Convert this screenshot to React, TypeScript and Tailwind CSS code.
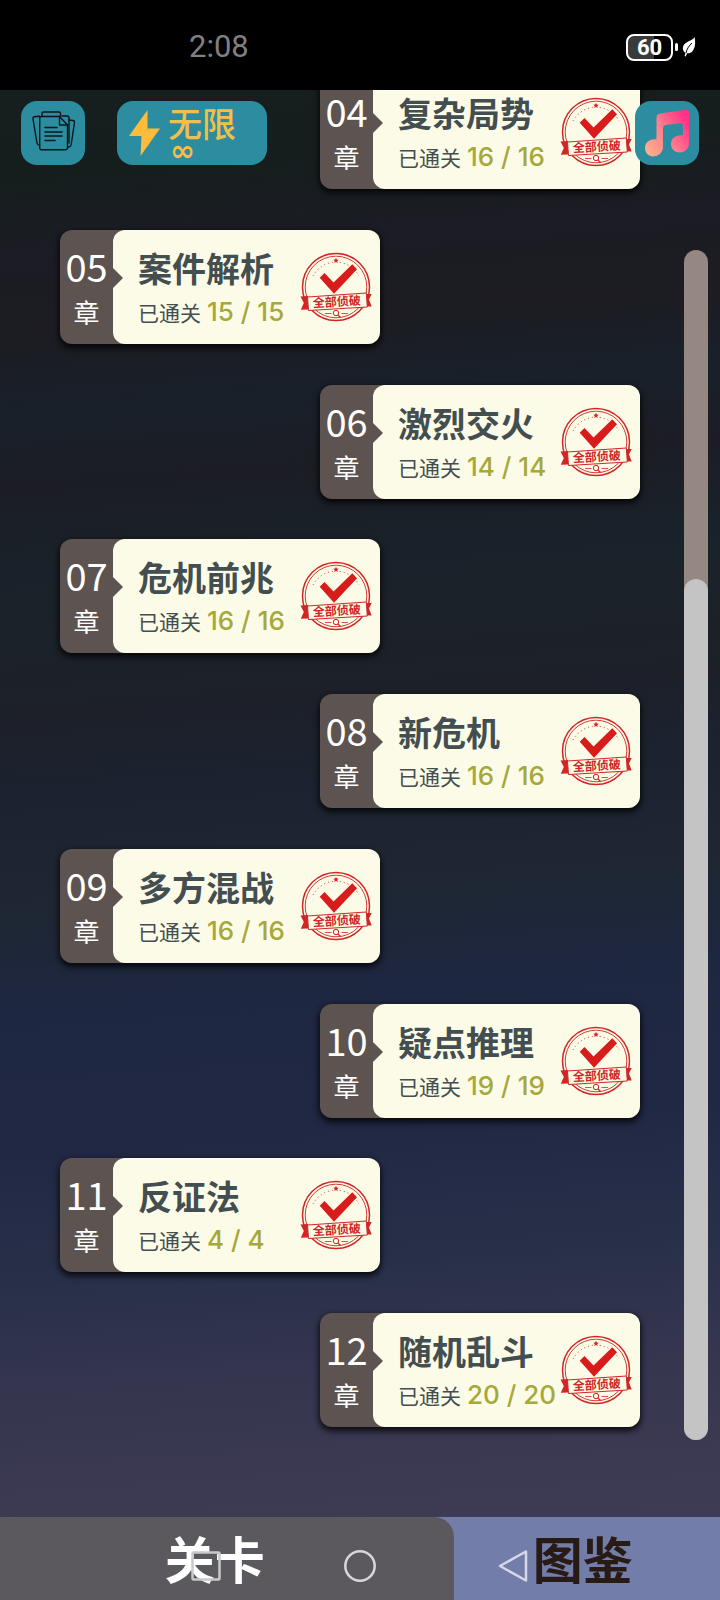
import { FC, ReactElement } from 'react';

interface Chapter {
  id: string;
  title: string;
  done: number;
  total: number;
}

const chapters: Chapter[] = [
  { id: '04', title: '复杂局势', done: 16, total: 16 },
  { id: '05', title: '案件解析', done: 15, total: 15 },
  { id: '06', title: '激烈交火', done: 14, total: 14 },
  { id: '07', title: '危机前兆', done: 16, total: 16 },
  { id: '08', title: '新危机', done: 16, total: 16 },
  { id: '09', title: '多方混战', done: 16, total: 16 },
  { id: '10', title: '疑点推理', done: 19, total: 19 },
  { id: '11', title: '反证法', done: 4, total: 4 },
  { id: '12', title: '随机乱斗', done: 20, total: 20 },
];

const StatusBar: FC = (): ReactElement => (
  <div className="flex h-[90px] items-center justify-between bg-black pl-[189px] pr-6 pt-1">
    <span className="font-['Roboto',sans-serif] text-[31px] leading-10 text-[#808080]">
      2:08
    </span>
    <div className="flex items-center">
      <div className="flex h-[27px] w-[47px] items-center justify-center rounded-lg border-2 border-white bg-linear-to-r from-[#3a3a3a] from-60% to-black to-60% font-['Roboto',sans-serif] text-[22px] font-bold text-white">
        60
      </div>
      <div className="ml-0.5 h-2 w-[3px] rounded-sm bg-white" />
      <svg className="ml-1 h-5 w-[14px]" viewBox="0 0 14 20">
        <path
          d="M12.6 0C13.5 5 13.6 10.500 10.500 14.200C9 16 6.800 16.600 5 16.200L3.800 19.600L2.600 19L3.400 15.900C0 13.500 0.200 9 3.400 6.300C6.500 3.800 10.800 3.400 12.600 0Z"
          fill="#fff"
        />
        <path d="M4 16C5 11.500 7.200 8.500 10 6" fill="none" stroke="#000" strokeWidth="1" />
      </svg>
    </div>
  </div>
);

const DocumentsIcon: FC = (): ReactElement => (
  <svg
    className="h-full w-full"
    viewBox="0 0 64 64"
    fill="none"
    stroke="#07171c"
    strokeWidth="1.4"
    strokeLinejoin="round"
    strokeLinecap="round"
  >
    <path d="M21 15V12.500Q21 11 22.500 11H38Q39.500 11 39.500 12.500V15" />
    <path d="M18.500 15.200L13.500 15.800Q11.700 16 12 18L16 42Q16.300 44 18.500 44.200" />
    <path d="M41 15H46Q48 15 48 17V19L52 19.500Q53.800 19.800 53.500 21.500L50.200 43.500Q49.800 46 47 46" />
    <path d="M48 19V42" />
    <path d="M20.500 15.500H38.500L46.500 24V46.500Q46.500 48.800 44.500 48.800H20.500Q18.700 48.800 18.700 46.500V17.500Q18.700 15.500 20.500 15.500Z" />
    <path d="M38.500 15.500V24H46.500" />
    <path d="M24 26.500H36M24 31H41M24 35H41M24 39.500H34" strokeWidth="1.600" />
  </svg>
);

const MusicIcon: FC = (): ReactElement => (
  <svg className="h-full w-full" viewBox="0 0 64 64">
    <defs>
      <linearGradient id="note" x1="10" y1="50" x2="54" y2="22" gradientUnits="userSpaceOnUse">
        <stop offset="0" stopColor="#ffb08c" />
        <stop offset="0.500" stopColor="#ff7f8d" />
        <stop offset="1" stopColor="#ff3387" />
      </linearGradient>
    </defs>
    <path
      d="M21.500 17Q21.500 13.200 25 12.500L50.500 8.800Q54 8.200 54 12V41C54.500 46.500 50.500 51.500 45 51.500C40 51.500 36 48 36 43C36 37 41.500 33 48 34.500V24.500Q48 22 45.500 22.300L30.500 24Q28 24.500 28 27V45C28.500 51 23.500 55.500 18 55.500C13.500 55.500 10 51.500 10 47C10 41 15.500 37 21.500 38.500Z"
      fill="url(#note)"
    />
  </svg>
);

const Stamp: FC = (): ReactElement => (
  <svg className="h-[72px] w-[72px] shrink-0" viewBox="0 0 72 72">
    <g fill="none" stroke="#cf2626">
      <circle cx="36" cy="36" r="33.500" strokeWidth="1.500" />
      <circle cx="36" cy="36" r="30.800" strokeWidth="0.900" />
      <path d="M13 25A26 26 0 0 1 59 25" strokeWidth="1" strokeDasharray="1 3" />
    </g>
    <circle cx="36" cy="9.300" r="3.500" fill="#fcfbe7" />
    <path
      d="M36 6.800L36.800 8.600L38.700 8.800L37.300 10.100L37.700 12L36 11L34.300 12L34.700 10.100L33.300 8.800L35.200 8.600Z"
      fill="#d92222"
    />
    <path d="M19.700 26.800L24.500 22L33.500 31.500L52.300 13.300L57 18.300L34 42.800Z" fill="#d81c1c" />
    <path d="M0.500 45.500L8 45V58.500L0.800 58.800L3.800 52Z" fill="#cf2626" />
    <path d="M66.500 43L71.700 43L69 48.500L71.700 55.500H66.500Z" fill="#cf2626" />
    <path
      d="M7.500 46L66.300 42L67.300 56L8.500 59.500Z"
      fill="#fcfbe7"
      stroke="#cf2626"
      strokeWidth="1"
    />
    <text
      x="37"
      y="55"
      transform="rotate(-3 37 55)"
      textAnchor="middle"
      className="fill-[#cf2626] font-['Noto_Sans_CJK_SC',sans-serif] text-[12px] font-bold"
    >
      全部侦破
    </text>
    <g fill="none" stroke="#cf2626">
      <circle cx="36" cy="62" r="2.700" fill="#fcfbe7" strokeWidth="1" />
      <path d="M38 64L40.500 66.500" strokeWidth="1.300" />
      <path d="M25 62.500H31.500M41.500 62.500H48" strokeWidth="0.800" />
    </g>
  </svg>
);

const ChapterCard: FC<{ chapter: Chapter }> = ({ chapter }): ReactElement => (
  <a
    href={`#chapter-${chapter.id}`}
    className="flex w-[320px] rounded-xl bg-[#5d5350] shadow-[0_3px_6px_1px_rgba(0,0,0,0.8)]"
  >
    <div className="flex w-[53px] shrink-0 flex-col items-center gap-1 pt-3 text-white">
      <span className="text-[38px] leading-12">{chapter.id}</span>
      <span className="text-[26px] leading-9">章</span>
    </div>
    <div className="relative flex flex-1 items-center justify-between rounded-xl bg-[#fcfbe7] pl-[25px] pr-2">
      <svg className="absolute left-0 top-[38px] h-5 w-[10px]" viewBox="0 0 10 20">
        <path d="M0 0L10 10L0 20Z" fill="#5d5350" />
      </svg>
      <div className="flex flex-col gap-0.5 whitespace-nowrap py-3.5">
        <h2 className="text-[34px] font-bold leading-12 text-[#434e50]">{chapter.title}</h2>
        <p className="flex items-center gap-1.5 text-[21px] leading-9 text-[#434e50]">
          已通关
          <span className="font-['Inter',sans-serif] text-[26px] font-medium text-[#a6a83a]">
            {chapter.done} / {chapter.total}
          </span>
        </p>
      </div>
      <Stamp />
    </div>
  </a>
);

const TopBar: FC = (): ReactElement => (
  <header className="absolute inset-x-0 top-[101px] flex items-center px-[21px]">
    <button type="button" aria-label="档案" className="h-16 w-16 rounded-2xl bg-[#2b8d9f]">
      <DocumentsIcon />
    </button>
    <button
      type="button"
      className="ml-8 flex h-16 w-[150px] items-center gap-2 rounded-2xl bg-[#2b8d9f] pl-3 text-[#f3bf4c]"
    >
      <svg className="h-[46px] w-[31px]" viewBox="0 0 31 46">
        <path d="M18.500 0L0 26H12.500L11.500 46L31 18.500H18.500Z" fill="#ffbc3b" />
      </svg>
      <span className="flex flex-col items-start">
        <span className="text-[34px] font-medium leading-10">无限</span>
        <span className="pb-1 pl-0.5 font-['DejaVu_Sans',sans-serif] text-[30px] font-bold leading-4">
          ∞
        </span>
      </span>
    </button>
    <button type="button" aria-label="音乐" className="ml-auto h-16 w-16 rounded-2xl bg-[#2b8d9f]">
      <MusicIcon />
    </button>
  </header>
);

const BottomTabs: FC = (): ReactElement => (
  <nav className="relative flex h-[83px] bg-[#727daa] text-[50px] font-bold leading-none">
    <button type="button" className="w-[63%] rounded-tr-[20px] bg-[#5c595e] pb-1 pr-6 text-white">
      关卡
    </button>
    <button type="button" className="flex-1 pb-1 pr-2 text-[#281a14]">
      图鉴
    </button>
    <div className="pointer-events-none absolute inset-x-0 bottom-[18px] flex justify-center gap-[122px]">
      <svg className="h-8 w-8" viewBox="0 0 32 32" fill="none" stroke="#c9c9cb" strokeWidth="2.500">
        <rect x="2.500" y="2.500" width="27" height="27" rx="1" />
      </svg>
      <svg className="h-8 w-8" viewBox="0 0 32 32" fill="none" stroke="#d8d8da" strokeWidth="2.500">
        <circle cx="16" cy="16" r="14.700" />
      </svg>
      <svg
        className="h-8 w-8"
        viewBox="0 0 32 32"
        fill="none"
        stroke="#d5d8e6"
        strokeWidth="2.500"
        strokeLinejoin="round"
      >
        <path d="M28 1.500V30.500L2 16Z" />
      </svg>
    </div>
  </nav>
);

const App: FC = (): ReactElement => (
  <div className="relative flex min-h-screen flex-col bg-black font-['Noto_Sans_CJK_SC',sans-serif]">
    <StatusBar />
    <main className="flex flex-1 overflow-hidden bg-[linear-gradient(176deg,#171f1e_0%,#161e1d_6%,#1b1c24_11%,#1c1c22_17%,#19202a_22%,#1c1d24_27%,#19222a_33%,#1c2229_38%,#1d2029_43%,#1b2330_48%,#1e2733_56%,#1e2740_62%,#212844_72%,#283049_81%,#35354f_88%,#3a3951_94%,#3d3c54_100%)]">
      <div className="-mt-[15px] flex flex-1 flex-col justify-between pb-[90px] pl-[60px]">
        {chapters.map((chapter, index) => (
          <div key={chapter.id} className={index % 2 === 0 ? 'self-end' : 'self-start'}>
            <ChapterCard chapter={chapter} />
          </div>
        ))}
      </div>
      <div className="flex flex-col pb-[77px] pl-11 pr-3 pt-40">
        <div className="flex w-6 flex-1 flex-col justify-end rounded-full bg-[#958883]">
          <div className="h-[861px] rounded-full bg-[#c4c4c4]" />
        </div>
      </div>
    </main>
    <BottomTabs />
    <TopBar />
  </div>
);

export default App;
